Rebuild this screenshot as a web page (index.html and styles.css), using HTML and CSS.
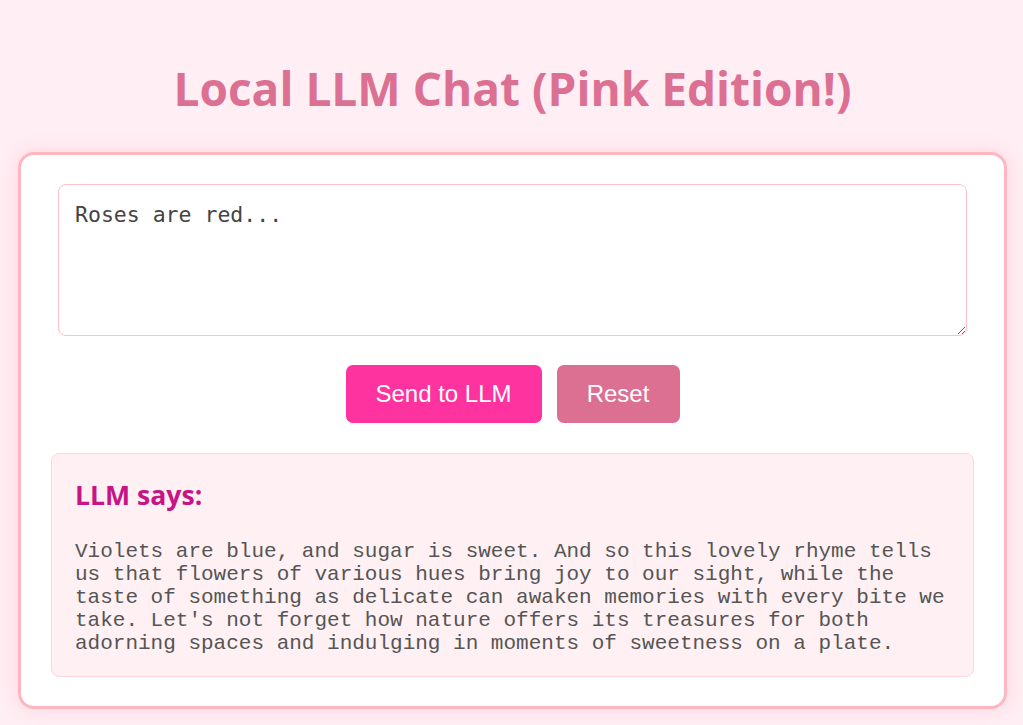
FILE: index.html
```html
<!DOCTYPE html>
<html lang="en">
<head>
<meta charset="utf-8">
<title>Local LLM Chat (Pink Edition!)</title>
<link rel="stylesheet" href="styles.css">
</head>
<body>
<h1 class="title">Local LLM Chat (Pink Edition!)</h1>
<main class="card">
  <textarea class="prompt">Roses are red...</textarea>
  <div class="actions">
    <button class="btn btn-send">Send to LLM</button>
    <button class="btn btn-reset">Reset</button>
  </div>
  <section class="result">
    <h2 class="result-title">LLM says:</h2>
    <pre class="result-text">Violets are blue, and sugar is sweet. And so this lovely rhyme tells us that flowers of various hues bring joy to our sight, while the taste of something as delicate can awaken memories with every bite we take. Let's not forget how nature offers its treasures for both adorning spaces and indulging in moments of sweetness on a plate.</pre>
  </section>
</main>
</body>
</html>
```

FILE: styles.css
```css
* { box-sizing: border-box; }

html, body {
  margin: 0;
  padding: 0;
}

body {
  background: #ffeef4;
  font-family: "Open Sans", "Noto Sans", sans-serif;
  padding: 0 16px 0 18px;
  height: 725px;
  overflow: hidden;
}

.title {
  margin: 0;
  padding-top: 58px;
  height: 152px;
  text-align: center;
  color: #db7093;
  font-size: 46px;
  font-weight: 700;
  line-height: 60px;
}

.card {
  background: #ffffff;
  border: 3px solid #ffb6c1;
  border-radius: 16px;
  padding: 29px 30px;
  box-shadow: 0 0 18px rgba(255, 182, 193, 0.45);
}

.prompt {
  display: block;
  width: calc(100% - 14px);
  margin: 0 auto;
  height: 152px;
  border: 1px solid #ffc0cb;
  border-radius: 8px;
  padding: 17px 16px 14px;
  font-family: "DejaVu Sans Mono", monospace;
  font-size: 21.5px;
  color: #444444;
  background: #ffffff;
  outline: none;
}

.actions {
  display: flex;
  justify-content: center;
  gap: 15px;
  margin: 29px 0 30px;
}

.btn {
  border: none;
  border-radius: 7px;
  color: #ffffff;
  font-family: "Liberation Sans", Arial, sans-serif;
  font-size: 24px;
  height: 58px;
  padding: 0;
  white-space: nowrap;
  cursor: pointer;
}

.btn-send { background: #ff33a0; width: 196px; }
.btn-reset { background: #db7093; width: 123px; }

.result {
  background: #fff0f3;
  border: 1px solid #ffd6e0;
  border-radius: 8px;
  padding: 24px 23px 22px;
  height: 224px;
}

.result-title {
  margin: 0 0 28px;
  color: #c71585;
  font-size: 26.6px;
  font-weight: 700;
  line-height: 34px;
}

.result-text {
  margin: 0;
  white-space: pre-wrap;
  font-family: "Liberation Mono", "Courier New", monospace;
  font-size: 21px;
  line-height: 23px;
  color: #555555;
}
```
